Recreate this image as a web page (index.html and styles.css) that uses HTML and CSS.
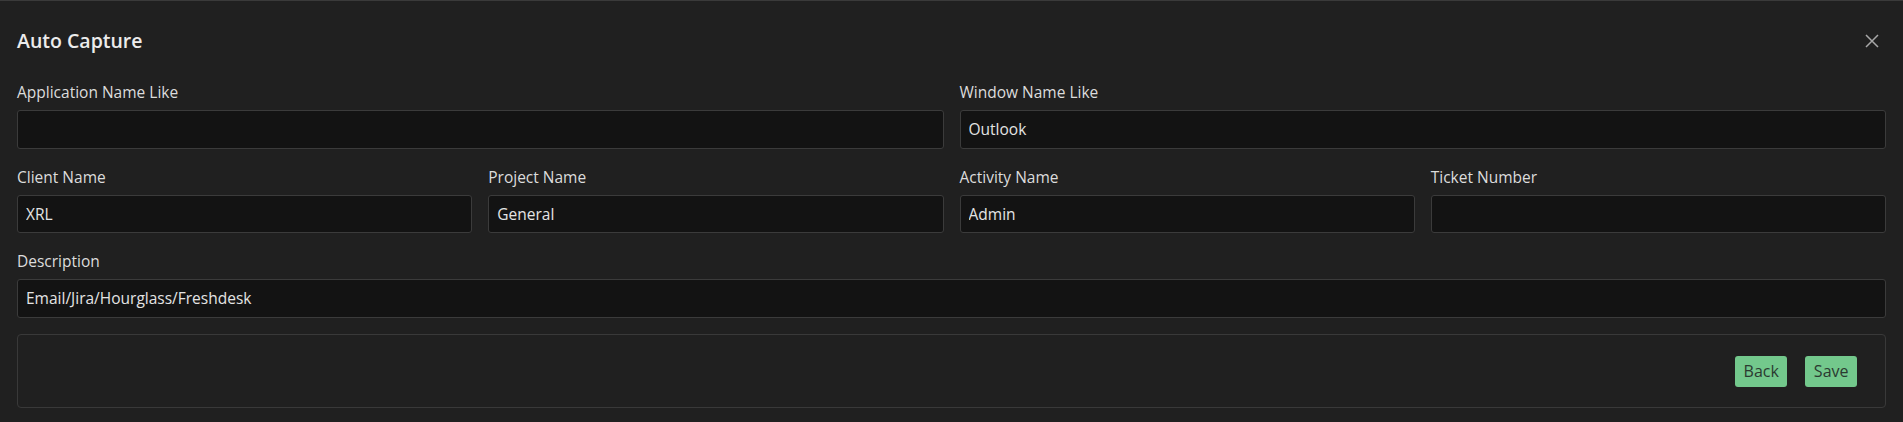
FILE: index.html
```html
<!DOCTYPE html>
<html lang="en">
<head>
<meta charset="utf-8">
<title>Auto Capture</title>
<link rel="stylesheet" href="styles.css">
</head>
<body>
<div class="modal">
  <div class="modal-header">
    <h1 class="modal-title">Auto Capture</h1>
    <button class="close-btn" aria-label="Close">
      <svg width="14" height="14" viewBox="0 0 14 14"><path d="M1 1 L13 13 M13 1 L1 13" stroke="#a8a8a8" stroke-width="1.5" fill="none"/></svg>
    </button>
  </div>
  <div class="modal-body">
    <div class="row cols-2">
      <div class="field"><label class="label">Application Name Like</label><input class="input" value=""></div>
      <div class="field"><label class="label">Window Name Like</label><input class="input" value="Outlook"></div>
    </div>
    <div class="row cols-4">
      <div class="field"><label class="label">Client Name</label><input class="input" value="XRL"></div>
      <div class="field"><label class="label">Project Name</label><input class="input" value="General"></div>
      <div class="field"><label class="label">Activity Name</label><input class="input" value="Admin"></div>
      <div class="field"><label class="label">Ticket Number</label><input class="input" value=""></div>
    </div>
    <div class="row cols-1">
      <div class="field"><label class="label">Description</label><input class="input" value="Email/Jira/Hourglass/Freshdesk"></div>
    </div>
    <div class="footer-box">
      <button class="btn">Back</button>
      <button class="btn">Save</button>
    </div>
  </div>
</div>
</body>
</html>
```

FILE: styles.css
```css
* { box-sizing: border-box; }
html, body {
  margin: 0;
  padding: 0;
  background: #202020;
  font-family: "Open Sans", "Noto Sans", sans-serif;
  color: #e2e2e2;
}
.modal {
  border-top: 1px solid #3a3a3a;
  min-height: 421px;
}
.modal-header {
  height: 79px;
  display: flex;
  align-items: center;
  justify-content: space-between;
  padding: 0 24px 0 17px;
}
.modal-title {
  margin: 0;
  font-size: 19.5px;
  font-weight: 600;
  color: #ececec;
}
.close-btn {
  background: none;
  border: 0;
  padding: 0;
  width: 15px;
  height: 15px;
  display: flex;
  align-items: center;
  justify-content: center;
  cursor: pointer;
}
.modal-body {
  padding: 0 17px;
  display: flex;
  flex-direction: column;
  gap: 16px;
}
.row {
  display: grid;
  gap: 16px;
}
.cols-1 { grid-template-columns: 1fr; }
.cols-2 { grid-template-columns: 1fr 1fr; }
.cols-4 { grid-template-columns: repeat(4, 1fr); }
.field {
  display: flex;
  flex-direction: column;
  gap: 6px;
}
.label {
  font-size: 15.5px;
  line-height: 24px;
  color: #dcdcdc;
}
.input {
  height: 38.5px;
  background: #131313;
  border: 1px solid #3b3b3b;
  border-radius: 3px;
  padding: 0 8px;
  font-family: inherit;
  font-size: 15.5px;
  color: #e4e4e4;
  outline: none;
}
.footer-box {
  margin-top: 0.5px;
  height: 74px;
  border: 1px solid #393939;
  border-radius: 4px;
  display: flex;
  align-items: center;
  justify-content: flex-end;
  gap: 18px;
  padding: 0 28px 0 0;
}
.btn {
  height: 31px;
  padding: 0 8.5px;
  background: #73c88c;
  color: #2b3a31;
  border: 0;
  border-radius: 3px;
  font-family: inherit;
  font-size: 16px;
  cursor: pointer;
}
```
